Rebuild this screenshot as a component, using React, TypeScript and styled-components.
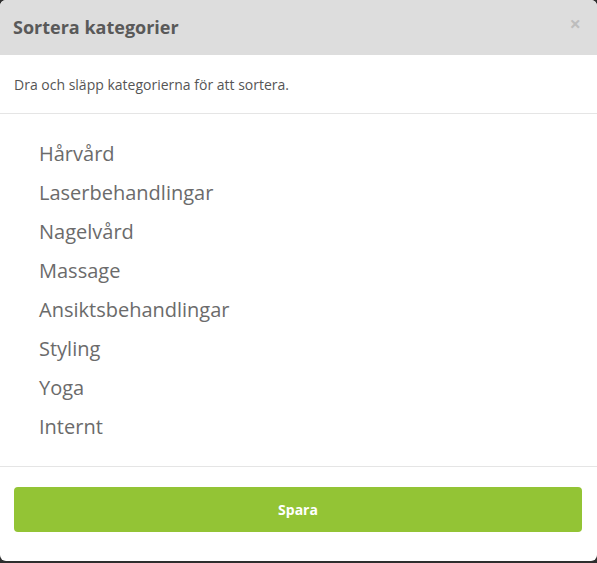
import React from "react";
import styled, { createGlobalStyle } from "styled-components";

const Global = createGlobalStyle`
  html, body { margin: 0; padding: 0; background: #2e2e2e; }
  body { font-family: "Open Sans", "Liberation Sans", sans-serif; }
  * { box-sizing: border-box; }
`;

const Modal = styled.div`
  width: 597px;
  height: 561px;
  background: #fff;
  border-radius: 6px;
  overflow: hidden;
  display: flex;
  flex-direction: column;
`;

const Header = styled.div`
  height: 55px;
  background: #dddddd;
  display: flex;
  align-items: center;
  justify-content: space-between;
  padding: 0 16px 0 13px;
`;

const Title = styled.h4`
  margin: 0;
  font-size: 18px;
  font-weight: 700;
  color: #595959;
  line-height: 25px;
`;

const Close = styled.button`
  border: 0;
  background: transparent;
  padding: 0;
  font-family: "Open Sans", sans-serif;
  font-size: 20px;
  font-weight: 700;
  color: #bdbdbd;
  line-height: 1;
  margin-top: -8px;
  cursor: pointer;
`;

const Intro = styled.p`
  margin: 0;
  padding: 20px 14px 19px;
  font-size: 14px;
  line-height: 19px;
  color: #555;
  border-bottom: 1px solid #e5e5e5;
`;

const List = styled.ul`
  margin: 0;
  list-style: none;
  padding: 20px 39px 20px;
  border-bottom: 1px solid #e5e5e5;
`;

const Item = styled.li`
  font-size: 20px;
  line-height: 39px;
  color: #6b6b6b;
  cursor: move;
`;

const Footer = styled.div`
  padding: 20px 15px 0 14px;
`;

const SaveButton = styled.button`
  width: 100%;
  height: 45px;
  border: 0;
  border-radius: 4px;
  background: #93c435;
  color: #fff;
  font-family: "Open Sans", sans-serif;
  font-size: 14px;
  font-weight: 700;
`;

const categories = [
  "Hårvård",
  "Laserbehandlingar",
  "Nagelvård",
  "Massage",
  "Ansiktsbehandlingar",
  "Styling",
  "Yoga",
  "Internt",
];

export default function App() {
  return (
    <>
      <Global />
      <Modal>
        <Header>
          <Title>Sortera kategorier</Title>
          <Close aria-label="Stäng">×</Close>
        </Header>
        <Intro>Dra och släpp kategorierna för att sortera.</Intro>
        <List>
          {categories.map((c) => (
            <Item key={c}>{c}</Item>
          ))}
        </List>
        <Footer>
          <SaveButton>Spara</SaveButton>
        </Footer>
      </Modal>
    </>
  );
}
